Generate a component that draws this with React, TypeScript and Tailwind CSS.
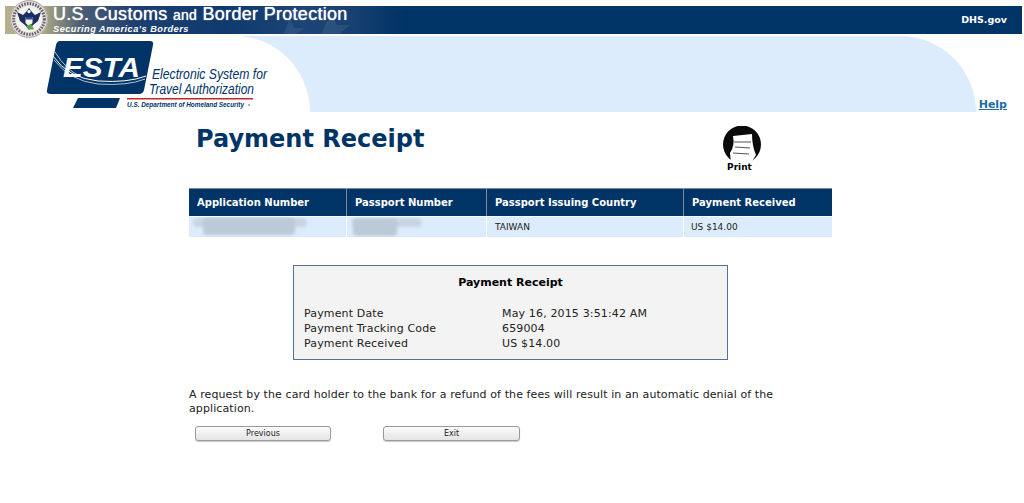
const verdana = 'font-["DejaVu_Sans",Verdana,sans-serif]';

const columns = [
  { label: 'Application Number', width: 'w-[158px]' },
  { label: 'Passport Number', width: 'w-[140px]' },
  { label: 'Passport Issuing Country', width: 'w-[197px]' },
  { label: 'Payment Received', width: 'flex-1' },
];

function Seal() {
  return (
    <svg width="40" height="38" viewBox="0 0 40 38" className="absolute left-[4px] top-[-6px]">
      <circle cx="20" cy="19" r="19" fill="#e4e2dc" />
      <circle cx="20" cy="19" r="18.4" fill="none" stroke="#9a948c" strokeWidth="0.8" />
      <circle cx="20" cy="19" r="15.4" fill="none" stroke="#6a5f74" strokeWidth="3" strokeDasharray="1.6 1.2" />
      <circle cx="20" cy="19" r="13" fill="#f4f3ee" />
      <path d="M8 12 L14 15 L17 12 L20 8 L23 12 L26 15 L32 12 L29 21 L24 25 L20 30 L16 25 L11 21 Z" fill="#1a2c60" />
      <circle cx="20" cy="11.5" r="1.7" fill="#f4f3ee" />
      <path d="M16.5 17 H23.5 V23 L20 26.5 L16.5 23 Z" fill="#f4f3ee" />
      <path d="M16.5 17 H23.5 V19.5 H16.5 Z" fill="#2a4a86" />
      <path d="M17 26 Q20 31 25 29 L22 24 Z" fill="#5aa544" />
    </svg>
  );
}

function BannerStars() {
  return (
    <svg width="110" height="28" viewBox="0 0 110 28" className="absolute left-[255px] top-0">
      <path d="M30 12 L34 22 L45 22 L36 28 H24 L26 22 Z" fill="#ffffff" fillOpacity="0.08" />
      <path d="M72 8 L77 19 L90 19 L80 27 L82 28 H62 L65 19 Z" fill="#ffffff" fillOpacity="0.08" />
    </svg>
  );
}

function EstaLogo() {
  return (
    <svg width="320" height="76" viewBox="0 0 320 76" className="shrink-0">
      <path d="M60 5 H150 Q154 5 153 9 L144 54 Q143 58 139 58 H51 Q46 58 47 54 L56 9 Q57 5 60 5 Z" fill="#003366" />
      <path d="M78 62 H120 L116 72 H73 Z" fill="#003366" />
      <text x="63" y="41" fontFamily="Liberation Sans, Arial, sans-serif" fontWeight="700" fontStyle="italic" fontSize="28" fill="#fff" textLength="77" lengthAdjust="spacingAndGlyphs">
        ESTA
      </text>
      <path d="M53 20 Q68 42 98 45 Q128 47 146 40" fill="none" stroke="#fff" strokeWidth="1" />
      <path d="M54 24 Q70 45 98 48 Q128 50 145 43" fill="none" stroke="#fff" strokeWidth="0.7" />
      <path d="M55 16 Q66 34 80 40" fill="none" stroke="#fff" strokeWidth="0.7" />
      <text x="152" y="43" fontFamily="Liberation Sans Narrow, Liberation Sans, sans-serif" fontStyle="italic" fontSize="15" fill="#003366" textLength="115" lengthAdjust="spacingAndGlyphs">
        Electronic System for
      </text>
      <text x="149" y="58" fontFamily="Liberation Sans Narrow, Liberation Sans, sans-serif" fontStyle="italic" fontSize="15" fill="#003366" textLength="105" lengthAdjust="spacingAndGlyphs">
        Travel Authorization
      </text>
      <rect x="127" y="62" width="126" height="1.5" fill="#c8242b" />
      <text x="127" y="71" fontFamily="Liberation Sans Narrow, Liberation Sans, sans-serif" fontWeight="700" fontStyle="italic" fontSize="8" fill="#003366" textLength="117" lengthAdjust="spacingAndGlyphs">
        U.S. Department of Homeland Security
      </text>
      <circle cx="249" cy="69" r="1" fill="#8a9ab5" />
    </svg>
  );
}

function PrintIcon() {
  return (
    <svg width="38" height="37" viewBox="0 0 38 37">
      <circle cx="19" cy="18.5" r="19" fill="#0a0a0a" />
      <path d="M10 10 L29 8 Q29 20 33 29 L28 37 H8 L7 27 Q12 20 10 10 Z" fill="#fff" />
      <path d="M11 16 H28 M12 21 L27 22 M10 27 L26 28" stroke="#555" strokeWidth="1.2" />
    </svg>
  );
}

export default function App() {
  return (
    <div className={`min-h-[503px] bg-white pt-[6px] text-[#222] ${verdana}`}>
      {/* Top banner */}
      <div className="relative ml-[5px] flex h-[28px] w-[1017px] items-center justify-between bg-[linear-gradient(90deg,#b5b08e_0px,#a8a583_40px,#4c5e74_75px,#1d3f70_130px,#0f3a6d_220px,#1d4476_300px,#16406f_350px,#003366_400px)]">
        <BannerStars />
        <Seal />
        <div className="relative ml-[48px] flex flex-col font-['Liberation_Sans',Arial,sans-serif] text-white">
          <div className="text-[18px] font-normal leading-[17px] tracking-[0.3px] [text-shadow:0_0_1px_#fff]">
            U.S. Customs <span className="text-[14px]">and</span> Border Protection
          </div>
          <div className="text-[9.2px] font-bold italic leading-[10px] tracking-[0.5px]">Securing America's Borders</div>
        </div>
        <span className="mr-[15px] text-[9.5px] font-bold text-white">DHS.gov</span>
      </div>

      {/* Logo and curved band */}
      <div className="relative mt-[2px] flex h-[76px] w-[1022px] items-end justify-end">
        <div className="absolute left-[235px] top-0 h-[76px] w-[741px] rounded-tr-[76px_76px] bg-[#dcecfd]">
          <div className="h-[76px] w-[75px] rounded-tr-[75px_76px] bg-white" />
        </div>
        <div className="absolute left-0 top-0">
          <EstaLogo />
        </div>
        <a className="relative mb-[-1px] mr-[15px] text-[11px] font-bold leading-[16px] text-[#1f6ea5] underline">Help</a>
      </div>

      <div className="ml-[189px] w-[643px]">
        {/* Title row */}
        <div className="flex h-[76px] items-start justify-between">
          <h1 className="ml-[7px] mt-[12px] text-[24px] font-bold leading-[30px] text-[#003366]">Payment Receipt</h1>
          <div className="mr-[71px] mt-[14px] flex w-[38px] flex-col items-center">
            <PrintIcon />
            <span className="-ml-[5px] -mt-[1px] text-[9px] font-bold leading-[11px] text-black">Print</span>
          </div>
        </div>

        {/* Summary table */}
        <div className="flex h-[28px] border-t border-[#7f8a99] bg-[#003366]">
          {columns.map((col) => (
            <div key={col.label} className={`${col.width} flex items-center border-r border-[#7f8a99] pl-[8px] text-[10px] font-bold text-white last:border-r-0`}>
              {col.label}
            </div>
          ))}
        </div>
        <div className="mt-[1px] flex h-[20px] gap-[1px] text-[9px] leading-[20px]">
          <div className="relative w-[157px] overflow-hidden bg-[#dcecfd]">
            <div className="absolute left-[4px] top-[1px] h-[9px] w-[114px] rounded-full bg-[#c8d5e3] blur-[1.5px]" />
            <div className="absolute left-[14px] top-[1px] h-[17px] w-[92px] rounded-sm bg-[#bcc9d7] blur-[1.5px]" />
          </div>
          <div className="relative w-[139px] overflow-hidden bg-[#dcecfd]">
            <div className="absolute left-[5px] top-[1px] h-[9px] w-[70px] rounded-full bg-[#c8d5e3] blur-[1.5px]" />
            <div className="absolute left-[6px] top-[2px] h-[17px] w-[44px] rounded-sm bg-[#bcc9d7] blur-[1.5px]" />
          </div>
          <div className="w-[196px] bg-[#dcecfd] pl-[8px]">TAIWAN</div>
          <div className="flex-1 bg-[#dcecfd] pl-[7px]">US $14.00</div>
        </div>

        {/* Receipt box */}
        <div className="ml-[104px] mt-[28px] h-[95px] w-[435px] border border-[#4f7396] bg-[#f3f3f3] pl-[10px]">
          <div className="mt-[10px] pr-[10px] text-center text-[11px] font-bold leading-[14px] text-black">Payment Receipt</div>
          <div className="mt-[16px] grid grid-cols-[198px_1fr] text-[11px] leading-[15px] tracking-[0.15px]">
            <span>Payment Date</span>
            <span>May 16, 2015 3:51:42 AM</span>
            <span>Payment Tracking Code</span>
            <span>659004</span>
            <span>Payment Received</span>
            <span>US $14.00</span>
          </div>
        </div>

        {/* Refund notice */}
        <p className="mt-[28px] max-w-[590px] text-[11px] leading-[14px] tracking-[0.1px]">
          A request by the card holder to the bank for a refund of the fees will result in an automatic denial of the application.
        </p>

        <div className="ml-[6px] mt-[10px] flex gap-[52px]">
          <button className="h-[15px] w-[136px] rounded-[3px] border border-[#9a9a9a] bg-[linear-gradient(#fbfbfb,#e4e4e4)] text-[8px] leading-[13px] text-[#222] shadow-[0_1px_1px_#ccc]">Previous</button>
          <button className="h-[15px] w-[137px] rounded-[3px] border border-[#9a9a9a] bg-[linear-gradient(#fbfbfb,#e4e4e4)] text-[8px] leading-[13px] text-[#222] shadow-[0_1px_1px_#ccc]">Exit</button>
        </div>
      </div>
    </div>
  );
}
